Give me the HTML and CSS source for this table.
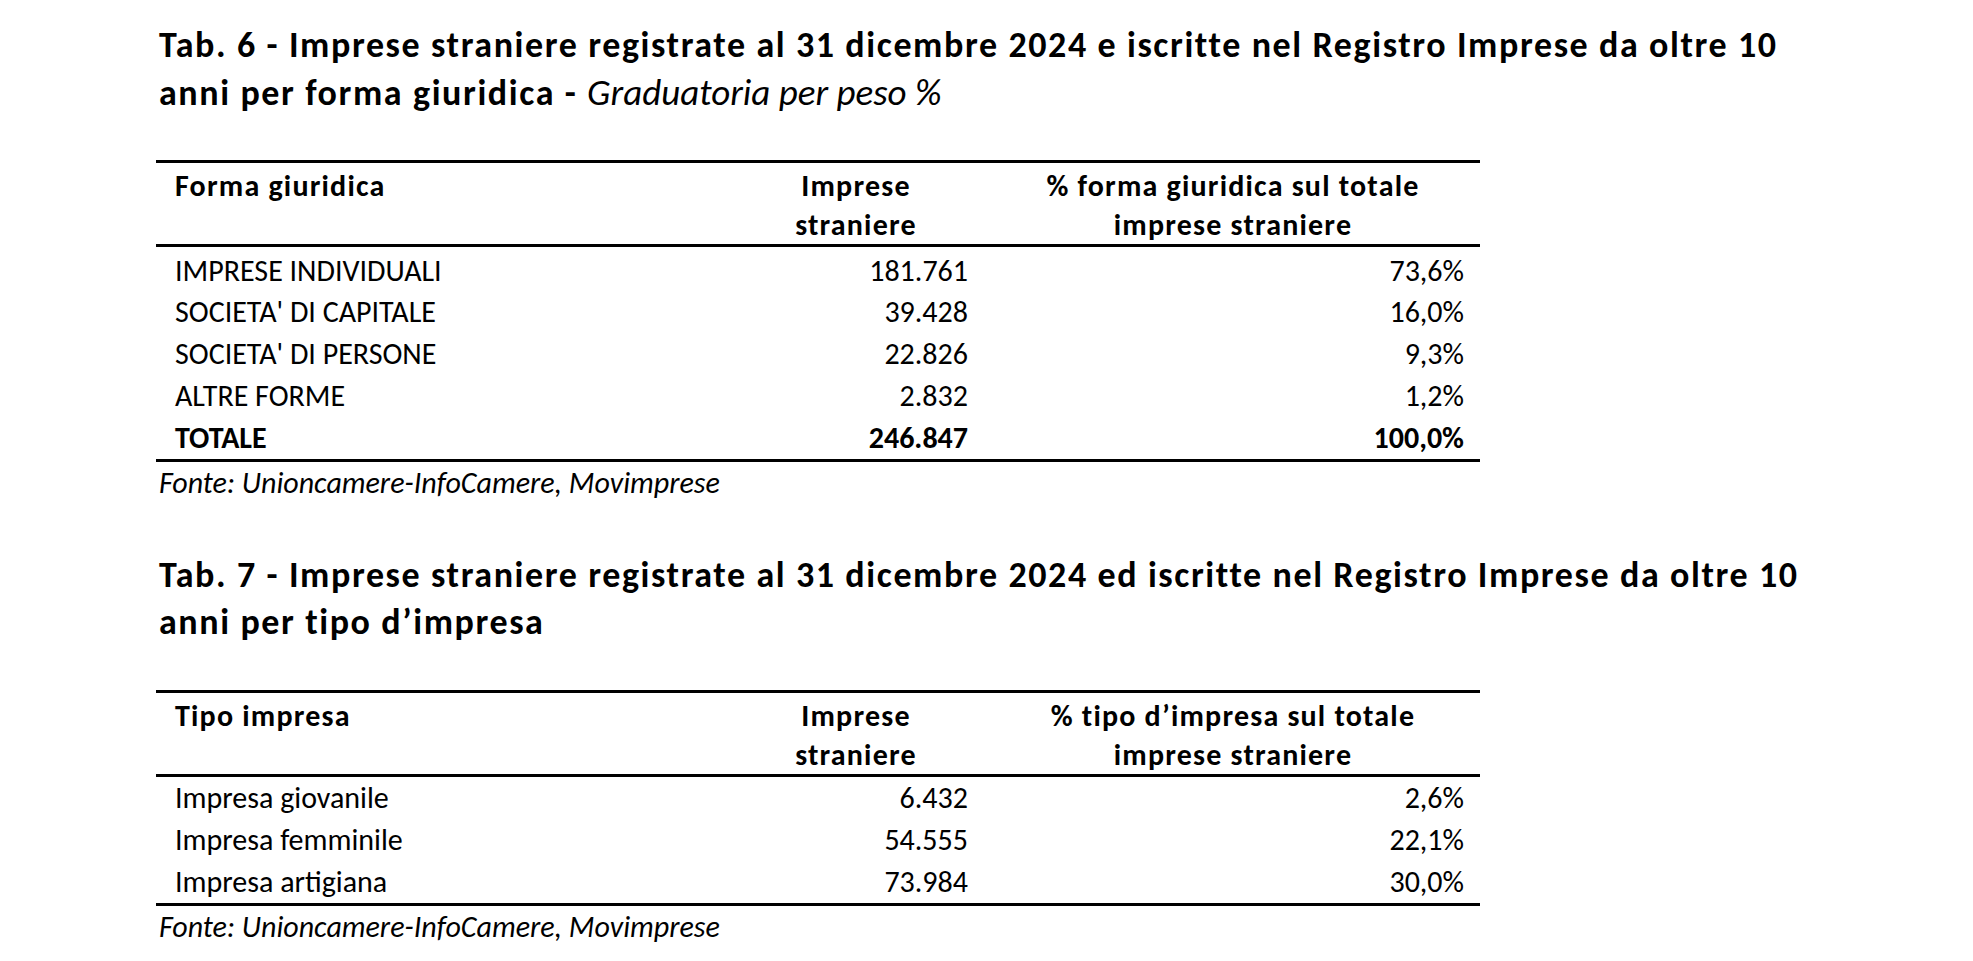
FILE: index.html
```html
<!DOCTYPE html>
<html lang="it">
<head>
<meta charset="utf-8">
<title>Imprese straniere</title>
<link rel="stylesheet" href="styles.css">
</head>
<body>
<main class="page">
  <section class="block first-block">
    <h2 class="title">Tab. 6 - Imprese straniere registrate al 31 dicembre 2024 e iscritte nel Registro Imprese da oltre 10<br>anni per forma giuridica - <span class="sub">Graduatoria per peso %</span></h2>
    <table class="data">
      <colgroup><col class="c1"><col class="c2"><col class="c3"></colgroup>
      <thead>
        <tr>
          <th class="lbl">Forma giuridica</th>
          <th class="ctr">Imprese<br>straniere</th>
          <th class="ctr">% forma giuridica sul totale<br>imprese straniere</th>
        </tr>
      </thead>
      <tbody>
        <tr class="first"><td class="lbl">IMPRESE INDIVIDUALI</td><td class="num">181.761</td><td class="num pct">73,6%</td></tr>
        <tr><td class="lbl">SOCIETA' DI CAPITALE</td><td class="num">39.428</td><td class="num pct">16,0%</td></tr>
        <tr><td class="lbl">SOCIETA' DI PERSONE</td><td class="num">22.826</td><td class="num pct">9,3%</td></tr>
        <tr><td class="lbl">ALTRE FORME</td><td class="num">2.832</td><td class="num pct">1,2%</td></tr>
        <tr class="total"><td class="lbl">TOTALE</td><td class="num">246.847</td><td class="num pct">100,0%</td></tr>
      </tbody>
    </table>
    <p class="source">Fonte: Unioncamere-InfoCamere, Movimprese</p>
  </section>

  <section class="block second-block">
    <h2 class="title">Tab. 7 - Imprese straniere registrate al 31 dicembre 2024 ed iscritte nel Registro Imprese da oltre 10<br>anni per tipo d’impresa</h2>
    <table class="data">
      <colgroup><col class="c1"><col class="c2"><col class="c3"></colgroup>
      <thead>
        <tr>
          <th class="lbl">Tipo impresa</th>
          <th class="ctr">Imprese<br>straniere</th>
          <th class="ctr">% tipo d’impresa sul totale<br>imprese straniere</th>
        </tr>
      </thead>
      <tbody>
        <tr><td class="lbl">Impresa giovanile</td><td class="num">6.432</td><td class="num pct">2,6%</td></tr>
        <tr><td class="lbl">Impresa femminile</td><td class="num">54.555</td><td class="num pct">22,1%</td></tr>
        <tr><td class="lbl">Impresa artigiana</td><td class="num">73.984</td><td class="num pct">30,0%</td></tr>
      </tbody>
    </table>
    <p class="source">Fonte: Unioncamere-InfoCamere, Movimprese</p>
  </section>
</main>
</body>
</html>
```

FILE: styles.css
```css
html, body {
  margin: 0;
  padding: 0;
  background: #ffffff;
  color: #000000;
}

body {
  font-family: Carlito, Lato, "Liberation Sans", sans-serif;
}

.page {
  padding: 22px 0 0 156px;
}

.second-block {
  margin-top: 50px;
}

.title {
  margin: 0 0 43px 3px;
  font-size: 36px;
  font-weight: 700;
  line-height: 47px;
  letter-spacing: 1.6px;
  white-space: nowrap;
}

.second-block .title {
  margin-bottom: 44px;
}

.title .sub {
  font-size: 37px;
  font-style: italic;
  font-weight: 400;
  letter-spacing: 0;
}

.data {
  width: 1324px;
  border-collapse: collapse;
  table-layout: fixed;
  border-top: 3px solid #000;
  border-bottom: 3px solid #000;
  font-size: 30px;
}

.data col.c1 { width: 570px; }
.data col.c2 { width: 260px; }
.data col.c3 { width: 494px; }

.data th {
  font-weight: 700;
  line-height: 38.5px;
  letter-spacing: 1.2px;
  vertical-align: top;
  padding: 4px 0 0 0;
  border-bottom: 3px solid #000;
}

.data td {
  line-height: 42px;
  height: 42px;
  padding: 0;
  box-sizing: border-box;
}

.data .lbl {
  text-align: left;
  padding-left: 19px;
}

.data .ctr {
  text-align: center;
}

.data .num {
  text-align: right;
  padding-right: 18px;
}

.data .num.pct {
  padding-right: 16px;
}

.data tr.first td {
  height: 44px;
  padding-top: 3px;
  line-height: 41px;
}

.data tr.total td {
  font-weight: 700;
}

.source {
  margin: 0 0 0 3px;
  padding-top: 1px;
  font-size: 30px;
  font-style: italic;
  line-height: 39px;
}
```
